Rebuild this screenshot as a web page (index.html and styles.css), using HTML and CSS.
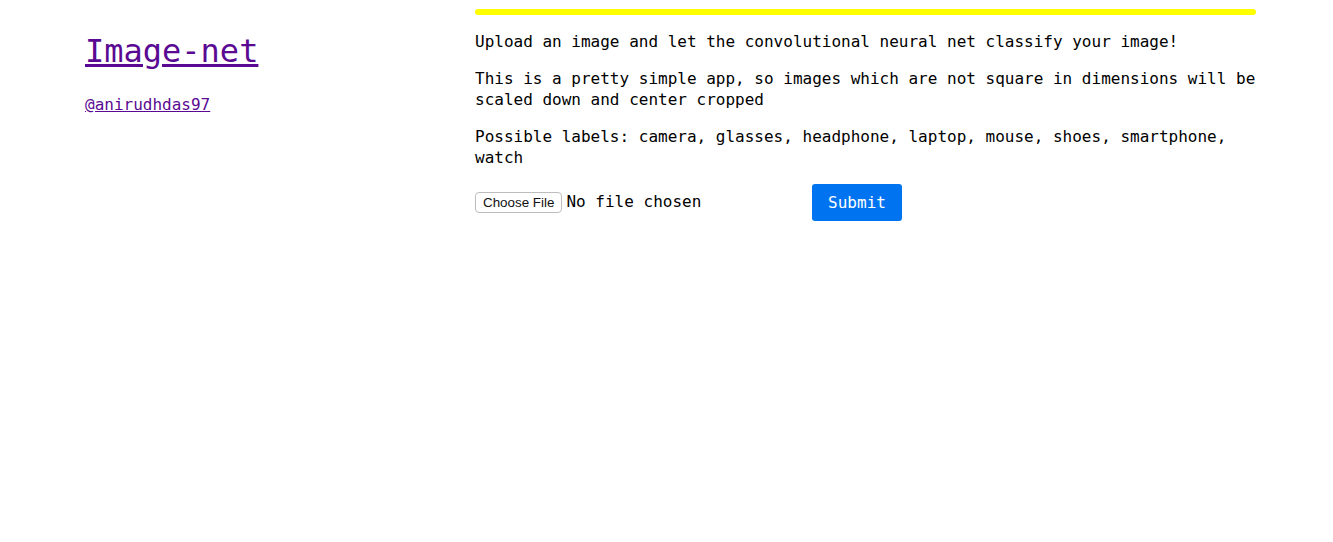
FILE: index.html
```html
<!DOCTYPE html>
<html lang="en">
<head>
<meta charset="utf-8">
<title>Image-net</title>
<link rel="stylesheet" href="styles.css">
</head>
<body>
<div class="page">
  <aside class="sidebar">
    <h1 class="title"><a href="#">Image-net</a></h1>
    <p class="handle"><a href="#">@anirudhdas97</a></p>
  </aside>
  <main class="content">
    <div class="bar"></div>
    <p>Upload an image and let the convolutional neural net classify your image!</p>
    <p>This is a pretty simple app, so images which are not square in dimensions will be scaled down and center cropped</p>
    <p>Possible labels: camera, glasses, headphone, laptop, mouse, shoes, smartphone, watch</p>
    <form class="upload">
      <input class="file" type="file" name="file">
      <button class="submit" type="button">Submit</button>
    </form>
  </main>
</div>
</body>
</html>
```

FILE: styles.css
```css
html, body {
  margin: 0;
  background: #fff;
}
body {
  font-family: "DejaVu Sans Mono", monospace;
  font-size: 16px;
  line-height: 21px;
  color: #000;
}
.page {
  display: flex;
  padding: 9px 0 0 85px;
}
.sidebar {
  width: 390px;
  flex: none;
  padding-top: 23px;
}
a {
  color: #5a0a92;
}
.title {
  margin: 0;
  font-size: 32px;
  line-height: 38px;
  font-weight: normal;
}
.handle {
  margin: 24px 0 0;
}
.content {
  width: 781px;
  flex: none;
}
.bar {
  height: 6px;
  background: #ffff00;
  border-radius: 3px;
}
.content p {
  margin: 16px 0 0;
}
.upload {
  display: flex;
  align-items: center;
  margin-top: 16px;
}
.file {
  font: inherit;
  width: 337px;
  margin: -2px 0 0;
  padding: 0;
  color: #000;
}
.file::file-selector-button {
  font-family: "Liberation Sans", Arial, sans-serif;
  font-size: 13.4px;
  height: 21px;
  padding: 0 7px;
  margin: 0 4px 0 0;
  border: 1px solid #bdbdbd;
  border-radius: 4px;
  background: #fff;
  color: #111;
  vertical-align: middle;
}
.submit {
  width: 90px;
  height: 37px;
  border: 0;
  border-radius: 3px;
  background: #0074f0;
  color: #fff;
  font: inherit;
  padding: 0;
}
```
